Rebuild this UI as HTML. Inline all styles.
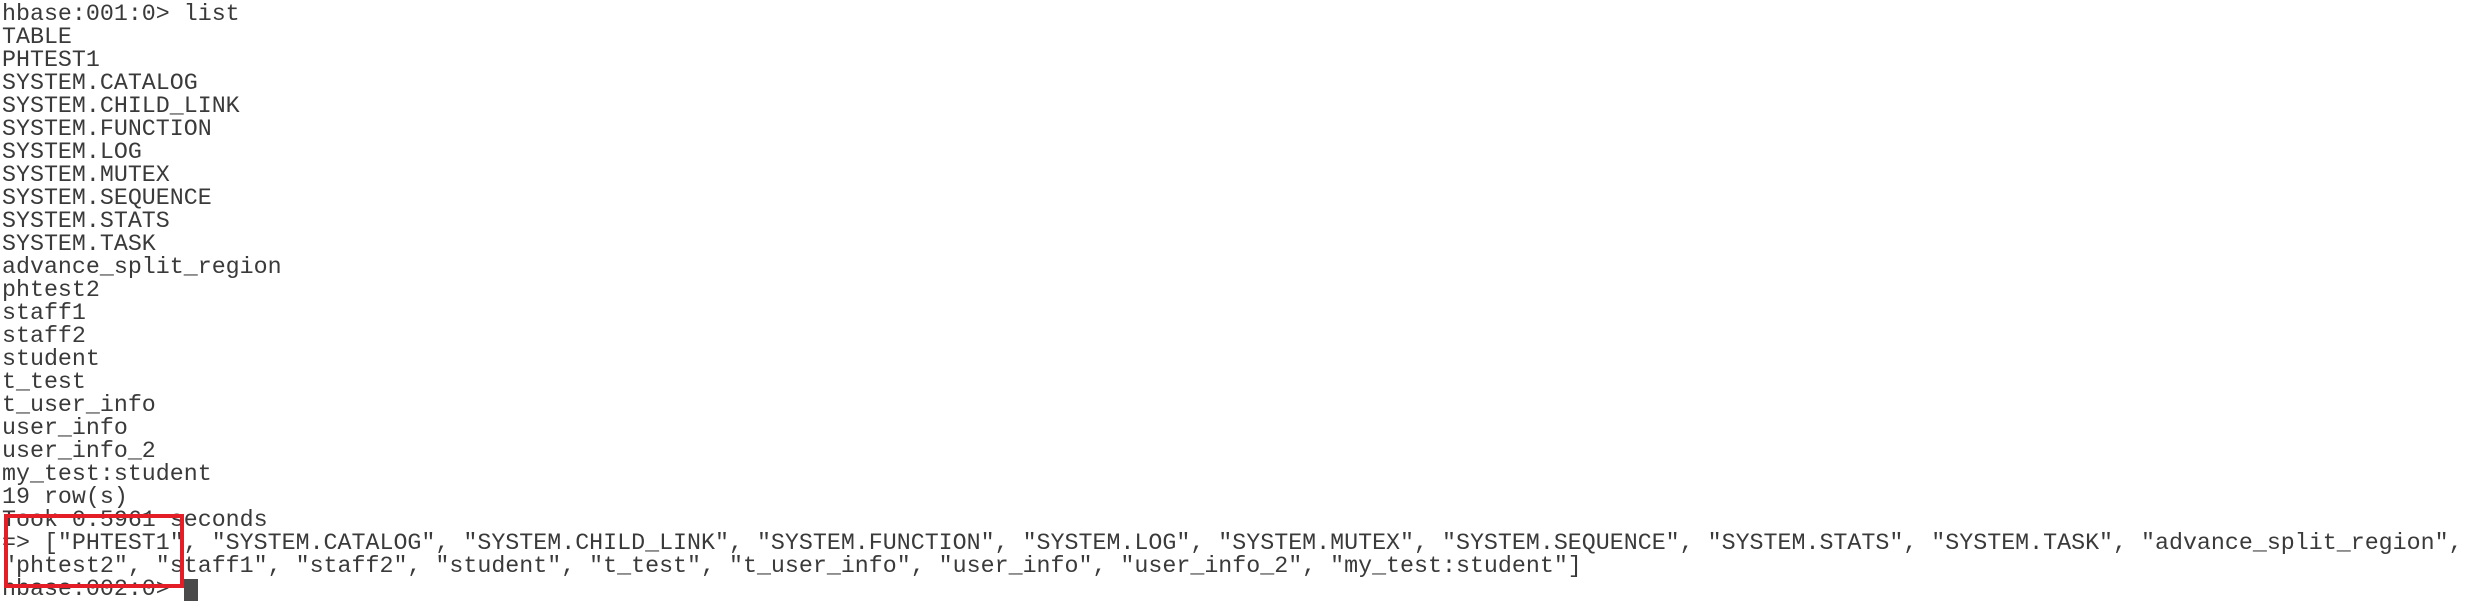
<!DOCTYPE html>
<html><head><style>
html,body{margin:0;padding:0;background:#fff;width:2491px;height:610px;overflow:hidden}
pre{margin:0;position:absolute;left:2px;top:3px;font-family:"Liberation Mono",monospace;font-size:23.3px;line-height:23px;color:#3a3a3a;white-space:pre}
.box{position:absolute;left:4px;top:514px;width:172px;height:66px;border:4px solid #e31e26}
.cur{position:absolute;left:184px;top:579px;width:14px;height:22px;background:#4a4a4a}
</style></head><body>
<pre>hbase:001:0&gt; list
TABLE
PHTEST1
SYSTEM.CATALOG
SYSTEM.CHILD_LINK
SYSTEM.FUNCTION
SYSTEM.LOG
SYSTEM.MUTEX
SYSTEM.SEQUENCE
SYSTEM.STATS
SYSTEM.TASK
advance_split_region
phtest2
staff1
staff2
student
t_test
t_user_info
user_info
user_info_2
my_test:student
19 row(s)
Took 0.5961 seconds
=&gt; ["PHTEST1", "SYSTEM.CATALOG", "SYSTEM.CHILD_LINK", "SYSTEM.FUNCTION", "SYSTEM.LOG", "SYSTEM.MUTEX", "SYSTEM.SEQUENCE", "SYSTEM.STATS", "SYSTEM.TASK", "advance_split_region",
"phtest2", "staff1", "staff2", "student", "t_test", "t_user_info", "user_info", "user_info_2", "my_test:student"]
hbase:002:0&gt; </pre>
<div class="box"></div>
<div class="cur"></div>
</body></html>
